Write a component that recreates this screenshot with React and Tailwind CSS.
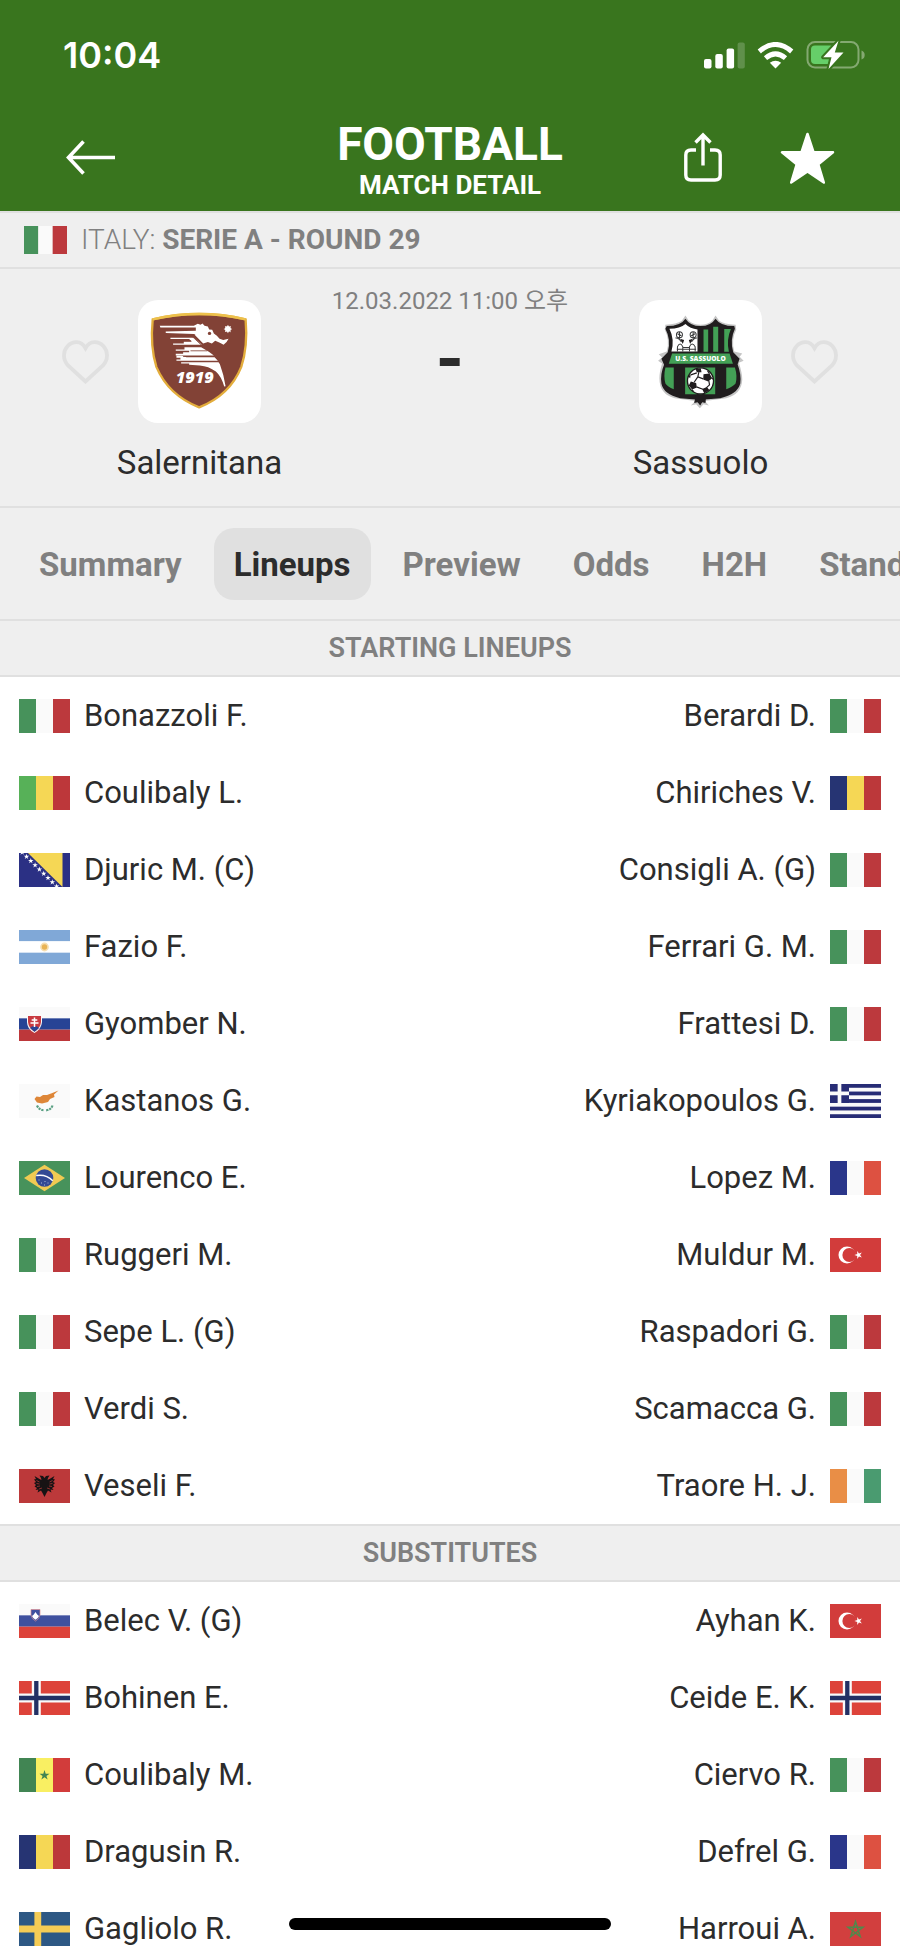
import React from "react";

const STAR5 = "M0 -1 L0.225 -0.309 L0.951 -0.309 L0.363 0.118 L0.588 0.809 L0 0.382 L-0.588 0.809 L-0.363 0.118 L-0.951 -0.309 L-0.225 -0.309 Z";

function Star({ x, y, r, fill, rotate = 0 }) {
  return <path d={STAR5} fill={fill} transform={`translate(${x} ${y}) rotate(${rotate}) scale(${r})`} />;
}

function Vertical({ colors }) {
  return colors.map((c, i) => <rect key={i} x={i * 17} width="17" height="34" fill={c} />);
}

function Horizontal({ colors }) {
  return colors.map((c, i) => <rect key={i} y={(i * 34) / 3} width="51" height={34 / 3} fill={c} />);
}

const FLAGS = {
  Italy: <Vertical colors={["#47925b", "#fafafa", "#bc393d"]} />,
  Mali: <Vertical colors={["#57b158", "#f5d755", "#bd373a"]} />,
  Romania: <Vertical colors={["#263473", "#f5d755", "#bc383a"]} />,
  France: <Vertical colors={["#2a368a", "#fafafa", "#dd5141"]} />,
  "Ivory Coast": <Vertical colors={["#e98e46", "#fafafa", "#4a9b70"]} />,
  Senegal: (
    <>
      <Vertical colors={["#418553", "#f9ef62", "#d23c3b"]} />
      <Star x={25.5} y={17.3} r={5.3} fill="#418553" />
    </>
  ),
  "Bosnia and Herzegovina": (
    <>
      <rect width="51" height="34" fill="#2b3084" />
      <path d="M9 0 H43.5 V34 Z" fill="#f5d755" />
      {[0, 1, 2, 3, 4, 5, 6, 7, 8].map((i) => (
        <Star key={i} x={3.2 + i * 4.3} y={-0.5 + i * 4.25} r={2.9} fill="#fff" />
      ))}
    </>
  ),
  Argentina: (
    <>
      <Horizontal colors={["#80a8d7", "#fff", "#80a8d7"]} />
      <circle cx="25.5" cy="17" r="4.4" fill="#f6deb0" />
      <circle cx="25.5" cy="17" r="2.7" fill="#e8b355" />
    </>
  ),
  Slovakia: (
    <>
      <Horizontal colors={["#fafafa", "#274395", "#bd373a"]} />
      <path d="M8 8 H23 V15 Q22.500 22 15.500 26 Q8 22 8 15 Z" fill="#fafafa" />
      <path d="M9 9 H22 V15 Q21.500 21 15.500 24.800 Q9.500 21 9 15 Z" fill="#c83a40" />
      <path d="M11 21 Q13 18.500 15.500 19.500 Q18 18.500 20 21 L15.500 24.800 Z" fill="#274395" />
      <path d="M15.500 10.500 V20 M12.700 13 H18.300 M11.500 16 H19.500" stroke="#fff" strokeWidth="1.500" fill="none" />
    </>
  ),
  Cyprus: (
    <>
      <rect width="51" height="34" fill="#fafafa" />
      <path d="M15.500 15 L17.500 12.500 L21 13 L24 11 L28 11 L32 9.500 L39.500 6.500 L35 10.500 L35.500 13 L31 15 L29 18 L23 19.500 L18 18.500 Z" fill="#de8638" />
      <path d="M18 21.500 Q20 26 25 26.300 M33.500 21.500 Q32 26 27 26.300" stroke="#5aa083" strokeWidth="2.200" strokeDasharray="2.200 0.900" fill="none" />
    </>
  ),
  Brazil: (
    <>
      <rect width="51" height="34" fill="#47925b" />
      <path d="M5 17 L25.500 3.800 L46 17 L25.500 30.200 Z" fill="#f0ca53" />
      <circle cx="25.500" cy="17" r="8.800" fill="#334a94" />
      <path d="M17.200 14.500 Q27 12.800 33.800 19.700" stroke="#fff" strokeWidth="1.500" fill="none" />
      <path d="M19.500 19 h1 M22 22 h1 M25.500 20.500 h1 M28.500 22 h1 M25 24 h1" stroke="#b9c4e0" strokeWidth="0.900" />
    </>
  ),
  Albania: (
    <>
      <rect width="51" height="34" fill="#bc393a" />
      <path d="M25.500 9 L24 7 L20.500 6.500 L22 9 L22.500 11 L20.500 10 L15.500 7 L17 10 L15 10.500 L17 13 L15 14 L17 16 L15.500 17.500 L18 19 L16.500 21 L19.500 20.500 L18.500 23.500 L22 21.500 L23.500 24 L25.500 28 L27.500 24 L29 21.500 L32.500 23.500 L31.500 20.500 L34.500 21 L33 19 L35.500 17.500 L34 16 L36 14 L34 13 L36 10.500 L34 10 L35.500 7 L30.500 10 L28.500 11 L29 9 L30.500 6.500 L27 7 Z" fill="#171314" />
      <path d="M17.500 11.500 L20.500 13 M17.500 14.500 L20.500 15 M18 17.500 L21 17 M33.500 11.500 L30.500 13 M33.500 14.500 L30.500 15 M33 17.500 L30 17 M20 20 L23 19 M31 20 L28 19" stroke="#bc393a" strokeWidth="0.700" />
    </>
  ),
  Greece: (
    <>
      <rect width="51" height="34" fill="#fafafa" />
      {[0, 2, 4, 6, 8].map((i) => (
        <rect key={i} y={(i * 34) / 9} width="51" height={34 / 9} fill="#272c75" />
      ))}
      <rect width="19" height={(34 / 9) * 5} fill="#272c75" />
      <path d="M9.500 0 V18.900 M0 9.450 H19" stroke="#fafafa" strokeWidth="3.700" />
    </>
  ),
  Turkey: (
    <>
      <rect width="51" height="34" fill="#d23c3b" />
      <circle cx="17" cy="17" r="8.500" fill="#fff" />
      <circle cx="19.300" cy="17" r="6.900" fill="#d23c3b" />
      <Star x={28.5} y={17} r={4.1} fill="#fff" rotate={-90} />
    </>
  ),
  Slovenia: (
    <>
      <Horizontal colors={["#fafafa", "#3f519f", "#dd433a"]} />
      <path d="M12 5.500 H21 V11 Q20.500 15 16.500 17 Q12.500 15 12 11 Z" fill="#3f519f" stroke="#d98a90" strokeWidth="0.700" />
      <path d="M13 12 L14.800 10.500 L16.500 8 L18.200 10.500 L20 12 Q19 14.500 16.500 15.800 Q14 14.500 13 12 Z" fill="#fff" />
    </>
  ),
  Norway: (
    <>
      <rect width="51" height="34" fill="#dd433a" />
      <path d="M17.300 0 V34 M0 17 H51" stroke="#fafafa" strokeWidth="9" />
      <path d="M17.300 0 V34 M0 17 H51" stroke="#233064" strokeWidth="4.300" />
    </>
  ),
  Sweden: (
    <>
      <rect width="51" height="34" fill="#2d5884" />
      <path d="M18.800 0 V34 M0 17 H51" stroke="#f5cc55" strokeWidth="6.800" />
    </>
  ),
  Morocco: (
    <>
      <rect width="51" height="34" fill="#d23f3e" />
      <path d="M25.500 9.500 L30.200 24.500 L18 15.300 H33 L20.800 24.500 Z" fill="none" stroke="#4f8a4c" strokeWidth="1.500" />
    </>
  ),
};

function Flag({ country, className = "w-[51px]" }) {
  return (
    <svg viewBox="0 0 51 34" role="img" aria-label={country} className={`shrink-0 ${className}`}>
      {FLAGS[country]}
    </svg>
  );
}

const STARTERS = [
  ["Bonazzoli F.", "Italy", "Berardi D.", "Italy"],
  ["Coulibaly L.", "Mali", "Chiriches V.", "Romania"],
  ["Djuric M. (C)", "Bosnia and Herzegovina", "Consigli A. (G)", "Italy"],
  ["Fazio F.", "Argentina", "Ferrari G. M.", "Italy"],
  ["Gyomber N.", "Slovakia", "Frattesi D.", "Italy"],
  ["Kastanos G.", "Cyprus", "Kyriakopoulos G.", "Greece"],
  ["Lourenco E.", "Brazil", "Lopez M.", "France"],
  ["Ruggeri M.", "Italy", "Muldur M.", "Turkey"],
  ["Sepe L. (G)", "Italy", "Raspadori G.", "Italy"],
  ["Verdi S.", "Italy", "Scamacca G.", "Italy"],
  ["Veseli F.", "Albania", "Traore H. J.", "Ivory Coast"],
];

const SUBSTITUTES = [
  ["Belec V. (G)", "Slovenia", "Ayhan K.", "Turkey"],
  ["Bohinen E.", "Norway", "Ceide E. K.", "Norway"],
  ["Coulibaly M.", "Senegal", "Ciervo R.", "Italy"],
  ["Dragusin R.", "Romania", "Defrel G.", "France"],
  ["Gagliolo R.", "Sweden", "Harroui A.", "Morocco"],
];

const TABS = ["Summary", "Lineups", "Preview", "Odds", "H2H", "Standings"];

function StatusBar() {
  return (
    <div className="flex h-[110px] items-center justify-between pr-[34px] pl-[63px]">
      <span className="font-['Inter'] text-[36px] font-semibold">10:04</span>
      <div className="flex items-center gap-3">
        <svg viewBox="0 0 41 27" className="w-[41px]" fill="#fff" role="img" aria-label="Signal">
          <rect x="0" y="17" width="7.500" height="9.500" rx="2" />
          <rect x="11.300" y="12" width="7.500" height="14.500" rx="2" />
          <rect x="22.600" y="6.500" width="7.500" height="20" rx="2" />
          <rect x="33.600" y="0.500" width="7.200" height="26" rx="2" opacity="0.200" />
        </svg>
        <svg viewBox="0 0 37 27" className="w-[37px]" role="img" aria-label="Wi-Fi">
          <path d="M18.500 26.500 L12.800 20.800 Q18.500 16.500 24.200 20.800 Z" fill="#fff" />
          <path d="M8.500 16.200 Q18.500 7.700 28.500 16.200" fill="none" stroke="#fff" strokeWidth="5" />
          <path d="M2.300 9.500 Q18.500 -4.500 34.700 9.500" fill="none" stroke="#fff" strokeWidth="5" />
        </svg>
        <svg viewBox="0 0 60 30" className="w-[60px]" role="img" aria-label="Battery charging">
          <rect x="1.500" y="2" width="51" height="25.500" rx="7.500" fill="none" stroke="#84a971" strokeWidth="2" />
          <path d="M55.500 10.500 Q58.700 11.500 58.700 15 Q58.700 18.500 55.500 19.500 Z" fill="#84a971" />
          <rect x="5" y="5.500" width="23" height="18.500" rx="4" fill="#66cf69" />
          <path d="M32.500 0.800 L17.200 17.200 H25.500 L22.500 29 L37.500 12.500 H28.800 Z" fill="#fff" stroke="#39751e" strokeWidth="4" strokeLinejoin="round" paintOrder="stroke" />
        </svg>
      </div>
    </div>
  );
}

function Header() {
  return (
    <header className="shrink-0 bg-[#39751e] text-white">
      <StatusBar />
      <div className="grid h-[101px] grid-cols-[1fr_auto_1fr] items-start px-[65px]">
        <button type="button" aria-label="Back" className="mt-[30px] justify-self-start">
          <svg viewBox="0 0 51 35" className="w-[51px]" fill="none" stroke="#fff" strokeWidth="3.600">
            <path d="M3.500 17.500 H50 M18.500 1.500 L3.500 17.500 L18.500 33.500" />
          </svg>
        </button>
        <div className="mt-[11px] text-center font-bold">
          <h1 className="text-[46px] leading-[46px]">FOOTBALL</h1>
          <p className="text-[26px] leading-[36px]">MATCH DETAIL</p>
        </div>
        <div className="mt-[22px] flex items-start justify-self-end gap-[58px]">
          <button type="button" aria-label="Share">
            <svg viewBox="0 0 38 50" className="w-[38px]" fill="none" stroke="#fff" strokeWidth="3.400">
              <path d="M12 18 H7 Q1.800 18 1.800 23 V43 Q1.800 48 7 48 H31 Q36.200 48 36.200 43 V23 Q36.200 18 31 18 H26" />
              <path d="M19 33.500 V3 M11.500 10.500 L19 3 L26.500 10.500" />
            </svg>
          </button>
          <button type="button" aria-label="Favourite match">
            <svg viewBox="0 0 55 52" className="w-[55px]">
              <path d="M27.500 2 L33.500 20.200 H53 L38.300 32.300 L43.800 50.500 L27.500 39.500 L11.200 50.500 L16.700 32.300 L2 20.200 H21.500 Z" fill="#fff" stroke="#fff" strokeWidth="2.500" strokeLinejoin="round" />
            </svg>
          </button>
        </div>
      </div>
    </header>
  );
}

function SalernitanaCrest() {
  return (
    <svg viewBox="55 30 368 368" className="w-full" role="img" aria-label="Salernitana crest">
      <path d="M99 88 Q238 56 377 88 Q384 170 364 230 Q330 315 238 351 Q146 315 110 230 Q91 170 99 88 Z" fill="#824236" stroke="#e3ad3c" strokeWidth="7" />
      <path d="M99 88 Q238 56 377 88" fill="none" stroke="#edc14c" strokeWidth="7" />
      <g fill="#fff">
        <path d="M120 107 H222 L234 101 L242 104 L248 100 L254 107 L264 109 L268 118 L277 119 L282 130 L291 137 L299 146 L310 150 L326 146 L320 156 L311 164 L300 158 L286 152 L276 160 L264 156 L250 160 L242 152 L228 138 L222 132 L138 129 V124 L228 122 V112 H122 Z" />
        <path d="M152 143 H222 L246 164 H160 V160 H192 V155 H216 L208 147 H152 Z" />
        <path d="M168 178 H194 V171 H244 Q268 184 282 196 H168 V191 H190 V186 H208 V182 H168 Z" />
        <path d="M170 197 H186 L200 201 H284 L294 212 H170 V208 H182 V203 H170 Z" />
        <path d="M184 216 H296 L300 222 Q312 254 317 288 L313 289 Q304 258 288 244 Q266 228 240 226 L208 224 V220 H184 Z" />
        <circle cx="324" cy="117" r="9" />
        <path d="M324 105 V129 M312 117 H336 M315.500 108.500 L332.500 125.500 M332.500 108.500 L315.500 125.500" stroke="#fff" strokeWidth="2.500" />
        <text x="168" y="279" fontFamily="Open Sans" fontSize="49" fontWeight="800" fontStyle="italic">1919</text>
      </g>
      <path d="M160 134 H226 M170 152 H214 M176 167 H240 M212 182 H262 M190 199 H284 M184 214 H296 M216 138 L248 168" stroke="#824236" strokeWidth="2.500" fill="none" />
      <circle cx="269" cy="130" r="5" fill="#824236" />
    </svg>
  );
}

function SassuoloCrest() {
  return (
    <svg viewBox="27 30 368 368" className="w-full" role="img" aria-label="Sassuolo crest">
      <defs>
        <clipPath id="sassuolo-body">
          <path d="M114 114 Q148 114 166 96 Q182 112 211 112 Q240 112 256 96 Q275 114 308 114 Q292 144 304 186 L318 232 Q330 262 322 290 Q290 320 211 322 Q130 320 98 290 Q92 262 104 232 L118 186 Q128 144 114 114 Z" />
        </clipPath>
      </defs>
      <path d="M166 76 L176 92 Q190 104 211 104 Q232 104 246 92 L256 76 L267 92 Q280 102 316 104 L318 118 Q302 150 312 184 L336 190 L328 200 L340 212 L326 218 Q336 250 336 268 Q334 312 288 324 L224 332 L236 346 L220 342 L209 354 L198 342 L182 346 L196 332 L134 324 Q88 312 88 264 Q88 246 96 220 L84 212 L96 202 L86 192 L110 184 Q120 150 104 118 L106 104 Q140 102 155 92 Z" fill="#c5c5c5" />
      <path d="M166 86 Q180 108 211 108 Q242 108 256 86 Q270 108 312 108 L314 116 Q298 150 309 186 L328 206 L322 222 Q334 254 330 280 Q322 312 270 324 L224 328 L226 338 L216 336 L210 344 L202 336 L192 338 L196 328 L150 324 Q100 312 94 280 Q90 252 102 224 L94 206 L113 186 Q124 150 106 116 L110 108 Q152 108 166 86 Z" fill="#201d1e" />
      <g clipPath="url(#sassuolo-body)">
        <path d="M118 116 Q150 116 166 102 Q180 116 202 118 V184 H124 Q134 148 118 116 Z" fill="#fff" />
        <path d="M220 118 H234 V185 H220 Z M249 110 H264 V185 H249 Z M282 117 H302 Q288 148 296 185 H282 Z" fill="#43a056" />
        <path d="M106 232 H131 V297 Q112 290 106 280 Q100 258 106 232 Z M165 232 H255 V312 H165 Z M288 232 H314 Q322 258 316 280 Q308 290 288 297 Z" fill="#43a056" />
      </g>
      <path d="M126 190 H298 L308 221 H116 Z" fill="#43a056" />
      <text x="211" y="214" textAnchor="middle" fontFamily="Open Sans" fontSize="20" fontWeight="800" fill="#fff">U.S. SASSUOLO</text>
      <g fill="none" stroke="#38393a" strokeWidth="3">
        <circle cx="148" cy="134" r="9" />
        <circle cx="189" cy="134" r="9" />
        <path d="M142 131 L154 137 M148 126 V146 M183 137 L195 131 M189 126 V146 M136 144 Q146 142 154 156 M201 144 Q192 142 184 156" />
        <path d="M142 184 V170 Q150 154 158 170 V184 M178 184 V170 Q186 154 195 170 V184 M158 172 H178 M140 177 H198" />
      </g>
      <path d="M150 146 L162 150 L158 162 Z M188 146 L176 150 L180 162 Z" fill="#201d1e" />
      <circle cx="211" cy="272" r="39" fill="#fff" stroke="#201d1e" strokeWidth="4" />
      <path d="M196 236 L212 234 L214 246 L200 246 Z M220 252 L238 250 L246 264 L234 274 L219 268 Z M182 274 L198 278 L200 292 L186 298 L176 286 Z M216 296 L230 290 L238 300 L222 309 Z M174 258 L182 252 L180 264 Z" fill="#201d1e" />
      <path d="M206 246 L203 260 L219 266 M203 260 L192 276 M236 272 L238 284 L229 292 M199 290 L218 297 M238 250 L232 242 M200 248 L182 254 M246 264 L250 268 M186 298 L190 304" stroke="#201d1e" strokeWidth="3.500" fill="none" />
      <path d="M196 316 L203 310 L211 316 L219 310 L228 316 L226 336 L216 334 L210 346 L203 334 L193 336 Z" fill="#201d1e" />
    </svg>
  );
}

function Team({ name, crest, reverse }) {
  return (
    <div className={`flex gap-[29px] ${reverse ? "flex-row-reverse" : ""}`}>
      <button type="button" aria-label={`Follow ${name}`} className="flex h-[123px] items-center">
        <svg viewBox="0 0 47 44" className="w-[47px]" fill="none" stroke="#e0e0e0" strokeWidth="3.800" strokeLinejoin="miter">
          <path d="M23.500 41.500 L6 25.500 Q2 21 2 15.500 A12.500 13 0 0 1 14.300 2.200 Q20 2 23.500 8.200 Q27 2 32.700 2.200 A12.500 13 0 0 1 45 15.500 Q45 21 41 25.500 Z" />
        </svg>
      </button>
      <div className="flex w-[123px] flex-col items-center">
        <div className="w-full overflow-hidden rounded-[20px] bg-white">{crest}</div>
        <h2 className="mt-5 text-[33px] leading-[40px] whitespace-nowrap text-[#2c2c2c]">{name}</h2>
      </div>
    </div>
  );
}

function SectionTitle({ children, className = "" }) {
  return (
    <h3 className={`border-b-2 border-[#e0e0e0] bg-[#efefef] text-center text-[27px] leading-[54px] font-semibold text-[#808080] ${className}`}>
      {children}
    </h3>
  );
}

function Lineup({ rows }) {
  return (
    <ul>
      {rows.map(([home, homeFlag, away, awayFlag]) => (
        <li key={home} className="flex h-[77px] items-center justify-between px-[19px] text-[31px] text-[#2c2c2c]">
          <a href="#player" className="flex items-center gap-[14px]">
            <Flag country={homeFlag} />
            <span className="pt-[2px]">{home}</span>
          </a>
          <a href="#player" className="flex items-center gap-[14px]">
            <span className="pt-[2px]">{away}</span>
            <Flag country={awayFlag} />
          </a>
        </li>
      ))}
    </ul>
  );
}

export default function App() {
  return (
    <div className="relative flex h-screen flex-col overflow-hidden bg-white font-['Roboto','Noto_Sans_CJK_KR',sans-serif]">
      <Header />
      <main className="min-h-0 flex-1 overflow-y-auto [scrollbar-width:none]">
        <div className="flex h-[58px] items-center gap-[14px] border-y-2 border-[#e0e0e0] bg-[#efefef] px-6 text-[28px] text-[#808080]">
          <Flag country="Italy" className="w-[43px]" />
          <p className="font-light">
            ITALY: <span className="font-bold">SERIE A - ROUND 29</span>
          </p>
        </div>

        <section className="flex h-[239px] items-start justify-between border-b-2 border-[#e0e0e0] bg-[#efefef] px-[62px] pt-[31px]">
          <Team name="Salernitana" crest={<SalernitanaCrest />} />
          <div className="-mt-4 flex flex-col items-center">
            <p className="text-[24px] leading-[34px] whitespace-nowrap text-[#808080]">12.03.2022 11:00 오후</p>
            <p className="mt-[6px] text-[72px] leading-[72px] font-bold text-[#2c2c2c]">-</p>
          </div>
          <Team name="Sassuolo" crest={<SassuoloCrest />} reverse />
        </section>

        <nav className="flex h-[113px] items-center gap-3 overflow-hidden border-b-2 border-[#e0e0e0] bg-[#efefef] pl-[19px]">
          {TABS.map((tab) => (
            <button
              key={tab}
              type="button"
              aria-current={tab === "Lineups" ? "page" : undefined}
              className={`h-[72px] shrink-0 rounded-[20px] px-5 pt-[2px] text-[33px] font-bold ${tab === "Lineups" ? "bg-[#e0e0e0] text-[#2c2c2c]" : "text-[#808080]"}`}
            >
              {tab}
            </button>
          ))}
        </nav>

        <SectionTitle>STARTING LINEUPS</SectionTitle>
        <Lineup rows={STARTERS} />
        <SectionTitle className="border-t-2">SUBSTITUTES</SectionTitle>
        <Lineup rows={SUBSTITUTES} />
      </main>
      <div className="absolute bottom-[19px] left-1/2 h-3 w-[322px] -translate-x-1/2 rounded-full bg-black" />
    </div>
  );
}
